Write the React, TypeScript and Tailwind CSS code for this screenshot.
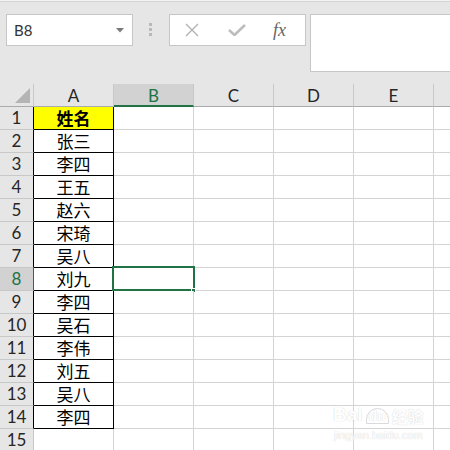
import React from "react"

const COLS = ["A", "B", "C", "D", "E", "F"]

const NAMES = [
  "姓名",
  "张三",
  "李四",
  "王五",
  "赵六",
  "宋琦",
  "吴八",
  "刘九",
  "李四",
  "吴石",
  "李伟",
  "刘五",
  "吴八",
  "李四",
]

const SELECTED_ROW = 8

function Toolbar() {
  return (
    <div className="flex h-[82px] items-start pt-[12px]">
      {/* Name box */}
      <div className="ml-[6px] flex h-[32px] w-[127px] items-center justify-between border border-[#c6c6c6] bg-white pl-[7px] pr-[8px]">
        <span className="text-[15px] text-[#333]">B8</span>
        <svg width="8" height="5" viewBox="0 0 8 5">
          <polygon points="0,0 8,0 4,4.5" fill="#7a7a7a" />
        </svg>
      </div>

      {/* Grip dots */}
      <div className="ml-[16px] mt-[9px] flex w-[4px] flex-col gap-[2px]">
        <span className="h-[3px] w-[3px] bg-[#b9b9b9]" />
        <span className="h-[3px] w-[3px] bg-[#b9b9b9]" />
        <span className="h-[3px] w-[3px] bg-[#b9b9b9]" />
      </div>

      {/* Cancel / enter / fx */}
      <div className="ml-[16px] flex h-[32px] w-[137px] items-center border border-[#c6c6c6] bg-white">
        <svg className="ml-[15px]" width="14" height="14" viewBox="0 0 14 14">
          <path d="M1 1 L13 13 M13 1 L1 13" stroke="#b3b3b3" strokeWidth="1.4" fill="none" />
        </svg>
        <svg className="ml-[29px]" width="18" height="12" viewBox="0 0 18 12">
          <path d="M1 6 L6.5 11 L17 1" stroke="#bdbdbd" strokeWidth="2.6" fill="none" />
        </svg>
        <span className="ml-[27px] font-['Liberation_Serif',serif] text-[18px] italic leading-none text-[#666]">
          fx
        </span>
      </div>

      {/* Formula input */}
      <div className="ml-[4px] h-[58px] flex-1 border-y border-l border-[#c6c6c6] bg-white" />
    </div>
  )
}

function HeaderRow() {
  return (
    <div className="flex h-[23px]">
      <div className="relative w-[34px] shrink-0 border-r border-b border-r-[#c8c8c8] border-b-[#ababab]">
        <svg className="absolute right-[3px] bottom-[3px]" width="15" height="15" viewBox="0 0 15 15">
          <polygon points="15,0 15,15 0,15" fill="#b4b4b4" />
        </svg>
      </div>
      {COLS.map(c =>
        c === "B" ? (
          <div
            key={c}
            className="flex w-[80px] shrink-0 items-center justify-center border-r border-b-2 border-r-[#c8c8c8] border-b-[#217346] bg-[#d2d2d2] pt-[2px] text-[17px] text-[#217346]"
          >
            {c}
          </div>
        ) : (
          <div
            key={c}
            className="flex w-[80px] shrink-0 items-center justify-center border-r border-b border-r-[#c8c8c8] border-b-[#ababab] pt-[1px] text-[17px] text-[#262626]"
          >
            {/* F lies beyond the window edge, only its left border shows */}
            {c === "F" ? null : c}
          </div>
        )
      )}
    </div>
  )
}

function DataRow({ n }: { n: number }) {
  const name = NAMES[n - 1]
  const hasData = name !== undefined
  const selected = n === SELECTED_ROW

  return (
    <div className="flex h-[23px]">
      <div
        className={
          selected
            ? "flex w-[34px] shrink-0 items-center justify-center border-r border-b border-r-[#217346] border-b-[#c8c8c8] bg-[#d2d2d2] text-[17px] text-[#217346]"
            : hasData
              ? "flex w-[34px] shrink-0 items-center justify-center border-r border-b border-r-black border-b-[#c8c8c8] text-[17px] text-[#262626]"
              : "flex w-[34px] shrink-0 items-center justify-center border-r border-b border-r-[#c8c8c8] border-b-[#c8c8c8] text-[17px] text-[#262626]"
        }
      >
        {n}
      </div>

      {/* Column A */}
      <div
        className={
          hasData
            ? n === 1
              ? "flex w-[80px] shrink-0 items-center justify-center border-r border-b border-black bg-[#ffff00] font-['Noto_Sans_CJK_SC',sans-serif] text-[17px] font-bold text-black"
              : "flex w-[80px] shrink-0 items-center justify-center border-r border-b border-black bg-white font-['Noto_Sans_CJK_SC',sans-serif] text-[17px] text-black"
            : "w-[80px] shrink-0 border-r border-b border-[#d4d4d4] bg-white"
        }
      >
        {name}
      </div>

      {/* Column B */}
      <div className="relative w-[80px] shrink-0 border-r border-b border-[#d4d4d4] bg-white">
        {selected && (
          <>
            <div className="absolute -top-[2px] -left-[2px] h-[25px] w-[83px] border-2 border-[#217346]" />
            <div className="absolute top-[20px] left-[77px] h-[5px] w-[5px] border border-white bg-[#217346]" />
          </>
        )}
      </div>

      {["C", "D", "E", "F"].map(c => (
        <div key={c} className="w-[80px] shrink-0 border-r border-b border-[#d4d4d4] bg-white" />
      ))}
    </div>
  )
}

export default function App() {
  const rows = Array.from({ length: 15 }, (_, i) => i + 1)

  return (
    <div className="relative h-[450px] w-[450px] overflow-hidden bg-[#e6e6e6] font-['Lato','Liberation_Sans',sans-serif]">
      <div className="h-[2px] border-b border-[#d4d4d4] bg-[#f2f2f2]" />
      <Toolbar />
      <HeaderRow />
      {rows.map(n => (
        <DataRow key={n} n={n} />
      ))}

      {/* faint watermark */}
      <div className="pointer-events-none absolute top-[404px] left-[333px] flex flex-col items-center text-white [text-shadow:0_0_1px_#c4c4c4]">
        <div className="flex h-[20px] items-end gap-[3px] font-['Liberation_Sans',sans-serif] font-bold leading-none">
          <span className="text-[19px]">Bai</span>
          <span className="rounded-t-full border border-[#dadada] px-[2px] text-[14px]">du</span>
          <span className="font-['Noto_Sans_CJK_SC',sans-serif] text-[16px]">经验</span>
        </div>
        <div className="mt-[6px] font-['Liberation_Sans',sans-serif] text-[11px] leading-none">jingyan.baidu.com</div>
      </div>
    </div>
  )
}
